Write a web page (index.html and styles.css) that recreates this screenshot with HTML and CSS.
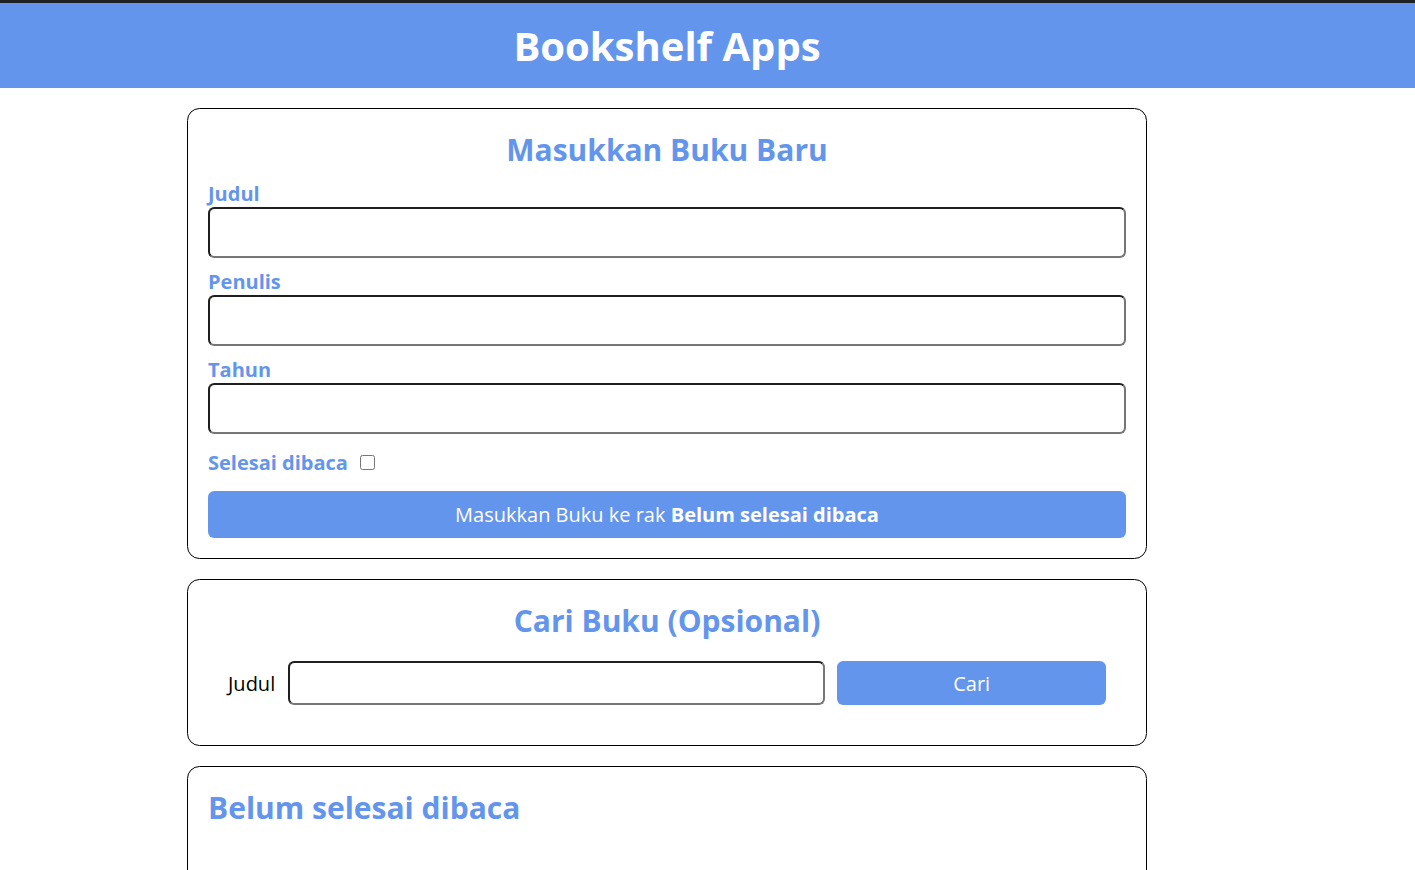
FILE: index.html
```html
<!DOCTYPE html>
<html lang="id">
<head>
<meta charset="utf-8">
<title>Bookshelf Apps</title>
<link rel="stylesheet" href="styles.css">
</head>
<body>
<header class="head-bar">
  <div class="head-inner">
    <h1 class="head-title">Bookshelf Apps</h1>
  </div>
</header>
<div class="page">
  <main class="main">
    <section class="card input-section">
      <h2 class="card-title center">Masukkan Buku Baru</h2>
      <form class="book-form">
        <div class="field">
          <label class="field-label" for="inputBookTitle">Judul</label>
          <input class="field-input" id="inputBookTitle" type="text">
        </div>
        <div class="field">
          <label class="field-label" for="inputBookAuthor">Penulis</label>
          <input class="field-input" id="inputBookAuthor" type="text">
        </div>
        <div class="field">
          <label class="field-label" for="inputBookYear">Tahun</label>
          <input class="field-input" id="inputBookYear" type="number">
        </div>
        <div class="field-inline">
          <label class="field-label inline" for="inputBookIsComplete">Selesai dibaca</label>
          <input class="check" id="inputBookIsComplete" type="checkbox">
        </div>
        <button class="submit-btn" type="button">Masukkan Buku ke rak <span class="strong">Belum selesai dibaca</span></button>
      </form>
    </section>

    <section class="card search-section">
      <h2 class="card-title center">Cari Buku (Opsional)</h2>
      <form class="search-form">
        <label class="search-label" for="searchBookTitle">Judul</label>
        <input class="search-input" id="searchBookTitle" type="text">
        <button class="search-btn" type="button">Cari</button>
      </form>
    </section>

    <section class="card shelf">
      <h2 class="card-title">Belum selesai dibaca</h2>
    </section>
  </main>
</div>
</body>
</html>
```

FILE: styles.css
```css
* {
  box-sizing: border-box;
  margin: 0;
  padding: 0;
  font-family: "Open Sans", "Noto Sans", sans-serif;
}

html, body {
  background: #ffffff;
  color: #000000;
}

body {
  border-top: 3px solid #202124;
}

.head-bar {
  background-color: #6495ed;
  height: 85px;
}

.head-inner {
  width: 1334px;
  height: 100%;
  display: flex;
  align-items: center;
  justify-content: center;
}

.head-title {
  color: #ffffff;
  font-size: 40px;
  font-weight: 700;
  line-height: 54px;
}

.page {
  width: 1334px;
}

.main {
  width: 960px;
  margin: 0 auto;
  padding-top: 20px;
  display: flex;
  flex-direction: column;
  gap: 20px;
}

.card {
  border: 1px solid #000000;
  border-radius: 12.5px;
  padding: 20px;
}

.card-title {
  color: #6495ed;
  font-size: 30px;
  font-weight: 700;
  line-height: 41px;
}

.center {
  text-align: center;
}

.book-form {
  display: flex;
  flex-direction: column;
}

.field {
  margin-top: 10px;
  display: flex;
  flex-direction: column;
}

.field-label {
  color: #6495ed;
  font-size: 20px;
  font-weight: 700;
  line-height: 27px;
}

.field-input {
  display: block;
  width: 100%;
  height: 51px;
  padding: 10px;
  font-size: 16.7px;
  border: 2px solid;
  border-color: #1f1f1f #767676 #767676 #1f1f1f;
  border-radius: 6.25px;
  background: #ffffff;
}

.field-inline {
  margin: 15px 0;
  height: 27px;
  display: flex;
  align-items: center;
}

.field-label.inline {
  margin-right: 12px;
}

.check {
  width: 15px;
  height: 15px;
  margin: 0;
}

.submit-btn {
  display: block;
  width: 100%;
  height: 47px;
  border: 0;
  border-radius: 6.25px;
  background-color: #6495ed;
  color: #ffffff;
  font-size: 20px;
  font-weight: 400;
}

.strong {
  font-weight: 700;
}

.search-section {
  display: flex;
  flex-direction: column;
  align-items: center;
}

.search-form {
  width: 100%;
  padding: 20px;
  display: grid;
  grid-template-columns: auto 1fr 0.5fr;
  gap: 12.5px;
}

.search-label {
  display: flex;
  align-items: center;
  font-size: 20px;
  color: #000000;
}

.search-input {
  height: 44px;
  padding: 6px;
  font-size: 16.7px;
  border: 2px solid;
  border-color: #1f1f1f #767676 #767676 #1f1f1f;
  border-radius: 6.25px;
}

.search-btn {
  height: 44px;
  border: 0;
  border-radius: 6.25px;
  background-color: #6495ed;
  color: #ffffff;
  font-size: 20px;
}

.shelf {
  min-height: 220px;
}
```
